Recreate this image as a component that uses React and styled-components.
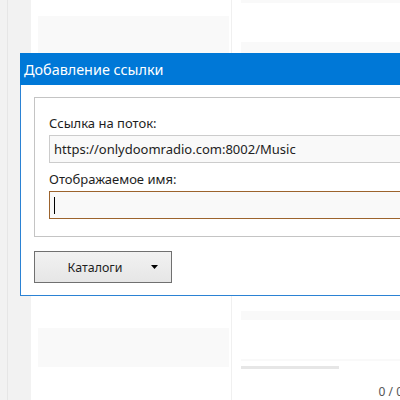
import React from 'react'
import styled, { createGlobalStyle } from 'styled-components'

const Global = createGlobalStyle`
  html, body {
    margin: 0;
    padding: 0;
    background: #ffffff;
    font-family: "Noto Sans", "Open Sans", sans-serif;
  }
`

const Page = styled.div`
  position: relative;
  width: 400px;
  height: 400px;
  overflow: hidden;
  display: flex;
`

const Sidebar = styled.div`
  width: 31px;
  flex-shrink: 0;
  background: #f2f2f2;
  display: flex;

  .edge {
    width: 7px;
    border-right: 1px solid #e6e6e6;
  }
`

const LeftColumn = styled.div`
  width: 191px;
  padding: 16px 2px 0 7px;
  border-right: 1px solid #f0f0f0;
  display: flex;
  flex-direction: column;
`

const RightColumn = styled.div`
  flex: 1;
  padding-left: 9px;
  display: flex;
  flex-direction: column;
`

const Block = styled.div`
  height: ${(p) => p.h}px;
  margin-top: ${(p) => p.mt || 0}px;
  background: ${(p) => p.bg || '#f9f9f9'};
  width: ${(p) => (p.w ? `${p.w}px` : 'auto')};
`

const Counter = styled.div`
  margin-top: 14px;
  align-self: flex-end;
  margin-right: -3px;
  font-size: 12px;
  color: #555555;
  white-space: nowrap;
`

const Dialog = styled.div`
  position: absolute;
  left: 20px;
  top: 53px;
  width: 400px;
  height: 242px;
  background: #ffffff;
  border: 1px solid #2b82d4;
  border-top: none;
  display: flex;
  flex-direction: column;
`

const TitleBar = styled.div`
  height: 32px;
  background: #0078d7;
  color: #ffffff;
  font-size: 14.4px;
  display: flex;
  align-items: center;
  padding-left: 4px;
  margin-left: -1px;
`

const Body = styled.div`
  padding: 12px 0 0 13px;
  display: flex;
  flex-direction: column;
`

const Group = styled.div`
  height: 140px;
  border: 1px solid #c4c4c4;
  border-right: none;
  padding: 16px 0 0 14px;
  box-sizing: border-box;
  display: flex;
  flex-direction: column;
`

const Label = styled.div`
  font-size: 13px;
  color: #1e1e1e;
  height: 19px;
  line-height: 19px;
  margin-bottom: 2px;
`

const Field = styled.div`
  height: 28px;
  box-sizing: border-box;
  background: #f9f9f9;
  border: 1px solid ${(p) => (p.focused ? '#9c632d' : '#cccccc')};
  border-right: none;
  padding-left: 4px;
  font-size: 13px;
  color: #222222;
  display: flex;
  align-items: center;
  margin-bottom: ${(p) => p.mb || 0}px;
`

const Caret = styled.span`
  width: 1px;
  height: 17px;
  background: #000000;
`

const DropButton = styled.div`
  margin-top: 14px;
  width: 138px;
  height: 32px;
  box-sizing: border-box;
  border: 1px solid #707070;
  background: linear-gradient(#f2f2f2, #e6e6e6);
  display: flex;
  align-items: center;
  font-size: 12.4px;
  color: #1e1e1e;

  .text {
    flex: 1;
    text-align: center;
    padding-left: 4px;
  }

  svg {
    margin-right: 13px;
  }
`

export default function App() {
  return (
    <>
      <Global />
      <Page>
        <Sidebar>
          <div className='edge' />
        </Sidebar>
        <LeftColumn>
          <Block h={60} />
          <Block h={39} mt={252} />
        </LeftColumn>
        <RightColumn>
          <Block h={7} />
          <Block h={40} mt={39} />
          <Block h={22} mt={251} />
          <Block h={5} mt={39} />
          <Block h={6} w={98} bg='#e6e6e6' mt={5} />
          <Counter>0 / 0</Counter>
        </RightColumn>

        <Dialog>
          <TitleBar>Добавление ссылки</TitleBar>
          <Body>
            <Group>
              <Label>Ссылка на поток:</Label>
              <Field mb={7}>https://onlydoomradio.com:8002/Music</Field>
              <Label>Отображаемое имя:</Label>
              <Field focused>
                <Caret />
              </Field>
            </Group>
            <DropButton>
              <span className='text'>Каталоги</span>
              <svg width='7' height='4' viewBox='0 0 7 4'>
                <path d='M0 0 H7 L3.5 4 Z' fill='#000' />
              </svg>
            </DropButton>
          </Body>
        </Dialog>
      </Page>
    </>
  )
}
